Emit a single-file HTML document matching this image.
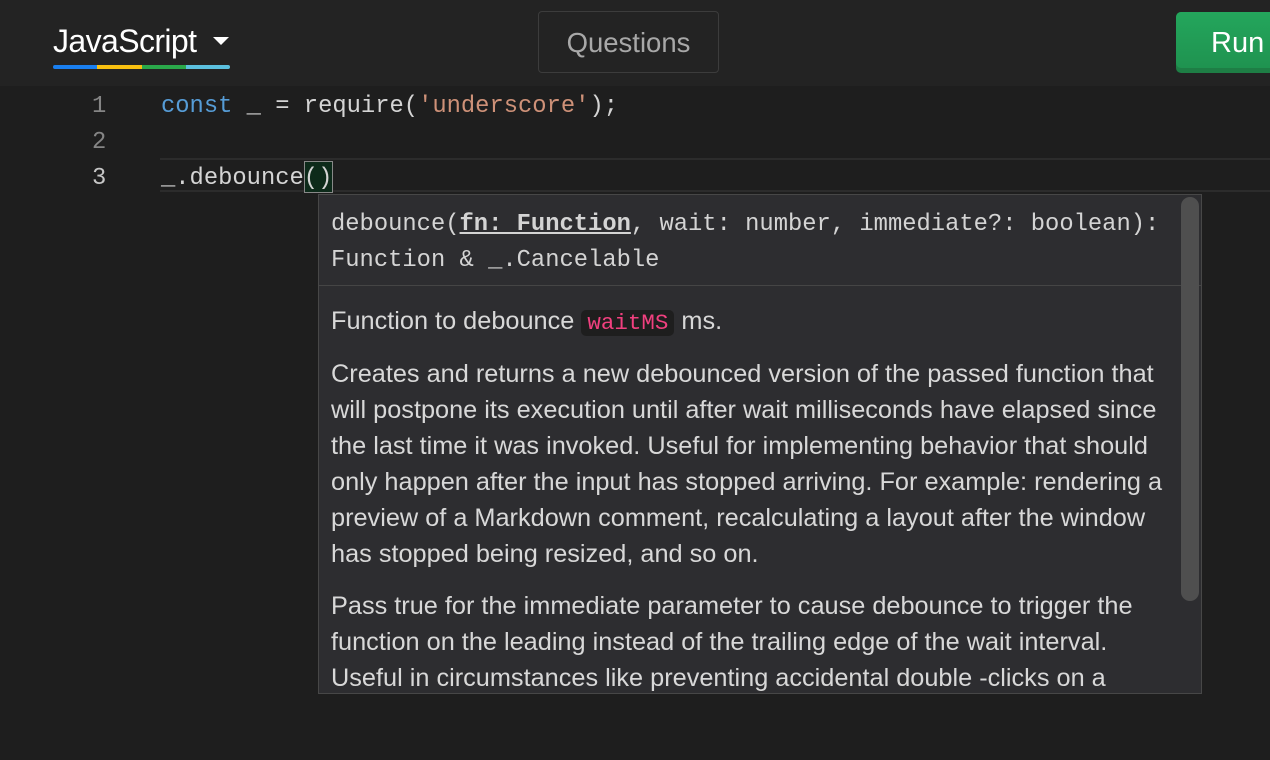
<!DOCTYPE html>
<html><head><style>
body{margin:0;width:1270px;height:760px;background:#1e1e1e;overflow:hidden;position:relative;font-family:"Liberation Sans",sans-serif}
.hdr{position:absolute;left:0;top:0;width:1270px;height:86px;background:#232323}
.abs{position:absolute;white-space:nowrap}
.mono{font-family:"Liberation Mono",monospace;font-size:23.8px}
.tt{position:absolute;left:318px;top:194px;width:882px;height:498px;background:#2d2d30;border:1px solid #474747;overflow:hidden}
.p{position:absolute;left:12px;font-size:25.3px;color:#d8d8d8;white-space:nowrap;line-height:36px}
</style></head><body>
<div class="hdr"></div>
<div class="abs" style="left:53px;top:23px;font-size:32px;color:#fff;letter-spacing:-0.6px">JavaScript</div>
<div class="abs" style="left:213px;top:37px;width:0;height:0;border-left:8px solid transparent;border-right:8px solid transparent;border-top:8px solid #fff"></div>
<div class="abs" style="left:53px;top:65px;height:4px;width:177px;border-radius:2px;overflow:hidden;display:flex">
<div style="flex:1;background:#1a7ff0"></div><div style="flex:1;background:#f8c010"></div><div style="flex:1;background:#2aa84a"></div><div style="flex:1;background:#5bc0de"></div></div>
<div class="abs" style="left:538px;top:11px;width:179px;height:60px;border:1px solid #3c3c3c;border-radius:4px;color:#a8a8a8;font-size:27.5px;line-height:62px;text-align:center">Questions</div>
<div class="abs" style="left:1176px;top:12px;width:110px;height:61px;background:#1e7e45;border-radius:5px"></div>
<div class="abs" style="left:1176px;top:12px;width:110px;height:56px;background:linear-gradient(#24a65c,#1f9350);border-radius:5px;color:#fff;font-size:29px;line-height:62px;padding-left:35px;box-sizing:border-box">Run</div>

<div class="abs" style="left:160px;top:158px;width:1110px;height:30px;border-top:2px solid #2c2c2c;border-bottom:2px solid #2c2c2c"></div>
<div class="abs mono" style="left:92px;top:93px;color:#858585">1</div>
<div class="abs mono" style="left:92px;top:129px;color:#858585">2</div>
<div class="abs mono" style="left:92px;top:165px;color:#c6c6c6">3</div>
<div class="abs mono" style="left:161px;top:93px;color:#d4d4d4"><span style="color:#569cd6">const</span> _ = require(<span style="color:#ce9178">'underscore'</span>);</div>
<div class="abs" style="left:304px;top:161px;width:29px;height:32px;border:1px solid #888;background:#0d2a1a;box-sizing:border-box"></div>
<div class="abs mono" style="left:161px;top:165px;color:#d4d4d4">_.debounce()</div>

<div class="tt">
<div class="abs mono" style="left:12px;top:12px;color:#d4d4d4;line-height:36px">debounce(<b style="text-decoration:underline">fn: Function</b>, wait: number, immediate?: boolean):<br>Function &amp; _.Cancelable</div>
<div class="abs" style="left:0;top:90px;width:882px;height:1px;background:#454545"></div>
<div class="abs" style="left:862px;top:2px;width:18px;height:404px;background:#4f4f4f;border-radius:9px"></div>
<div class="p" style="top:108px">Function to debounce <span style="font-family:'Liberation Mono',monospace;color:#f0407f;background:#1e1e1e;border-radius:5px;padding:0 6px;font-size:22.5px">waitMS</span> ms.</div>
<div class="p" style="top:161px">Creates and returns a new debounced version of the passed function that</div>
<div class="p" style="top:197px">will postpone its execution until after wait milliseconds have elapsed since</div>
<div class="p" style="top:233px">the last time it was invoked. Useful for implementing behavior that should</div>
<div class="p" style="top:269px">only happen after the input has stopped arriving. For example: rendering a</div>
<div class="p" style="top:305px">preview of a Markdown comment, recalculating a layout after the window</div>
<div class="p" style="top:341px">has stopped being resized, and so on.</div>
<div class="p" style="top:393px">Pass true for the immediate parameter to cause debounce to trigger the</div>
<div class="p" style="top:429px">function on the leading instead of the trailing edge of the wait interval.</div>
<div class="p" style="top:465px">Useful in circumstances like preventing accidental double -clicks on a</div>
</div>
</body></html>
